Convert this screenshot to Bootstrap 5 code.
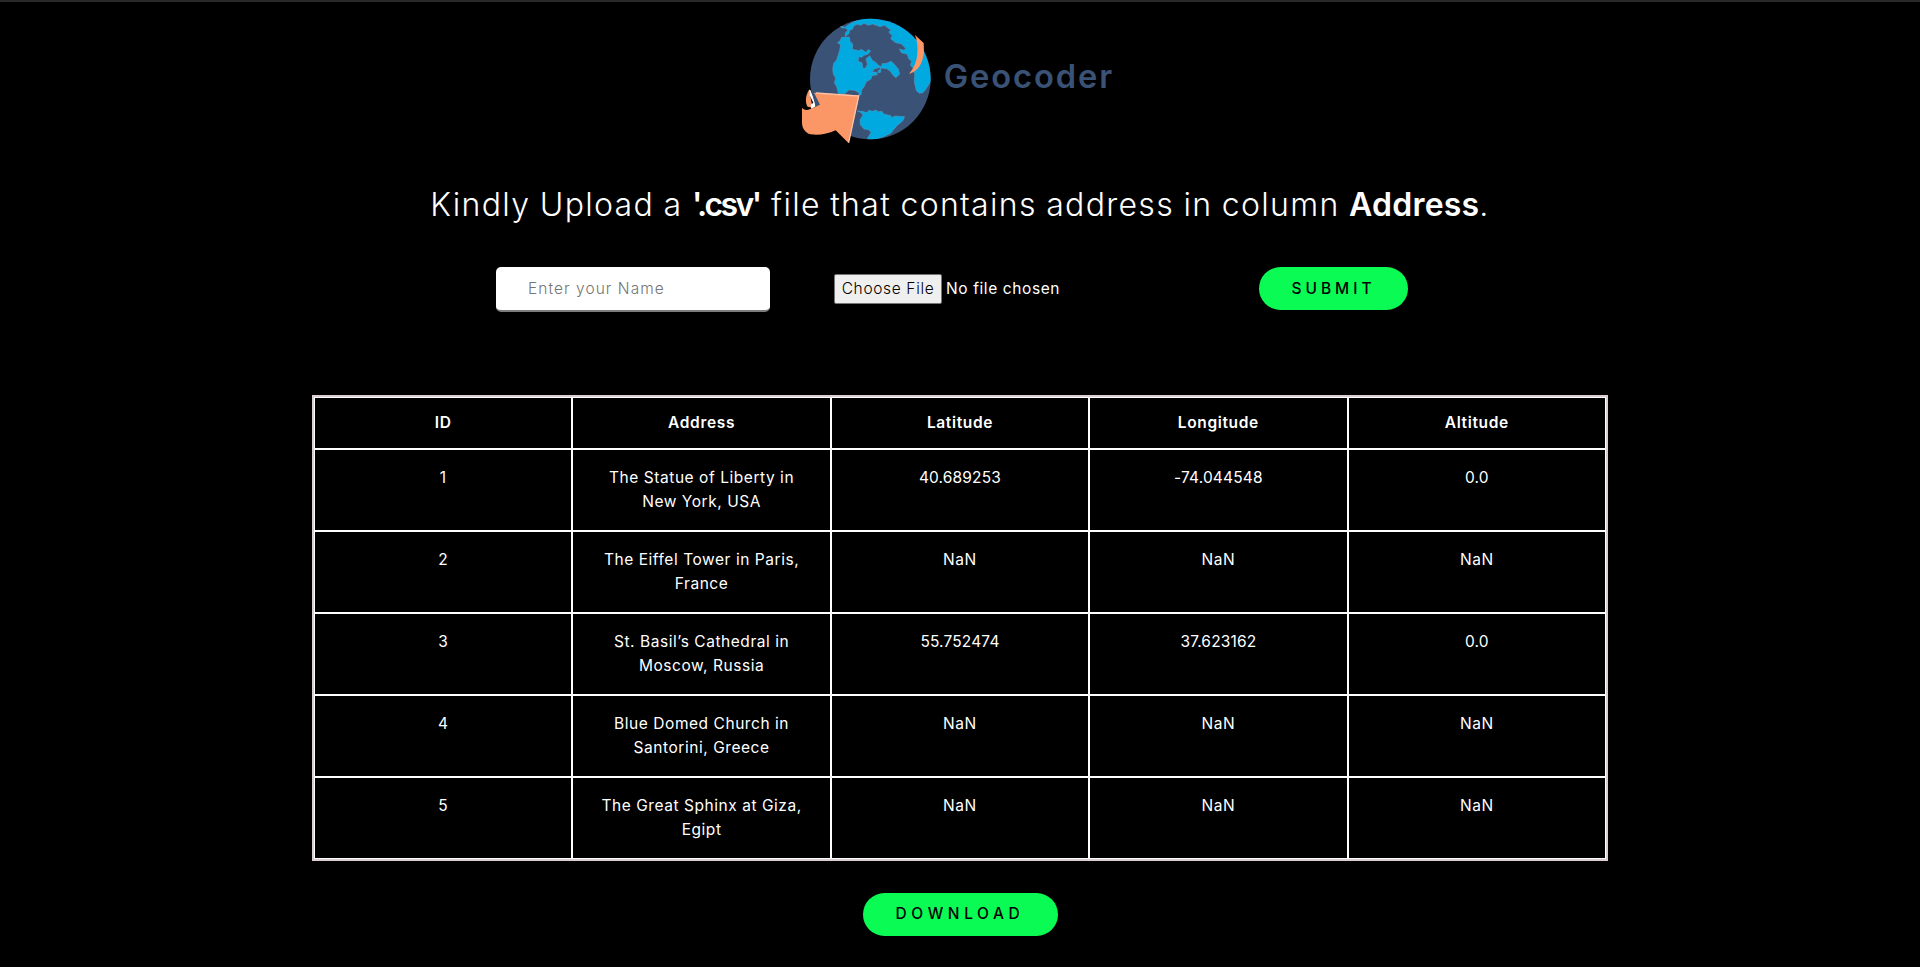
<!DOCTYPE html>
<html lang="en">
<head>
<meta charset="utf-8">
<meta name="viewport" content="width=device-width, initial-scale=1">
<title>Geocoder</title>
<link href="https://cdn.jsdelivr.net/npm/bootstrap@5.3.0/dist/css/bootstrap.min.css" rel="stylesheet">
<style>
body{background:#000;color:#fff;font:400 15.5px/24px Inter,"Open Sans",sans-serif;letter-spacing:.55px;border-top:2px solid #282828;height:967px;overflow:hidden}
.logo{display:block;width:340px;height:160px;margin-top:-2px}
h1{font-size:32px;line-height:40px;font-weight:300;letter-spacing:1.3px;word-spacing:-.8px;margin:25px 0 0;white-space:nowrap}
h1 b{font-weight:600;letter-spacing:.2px}
h1 b.ext{letter-spacing:-2.6px;margin-right:2px}
.upload{width:928px;height:45px;margin-top:42px;gap:64px}
.name-box{width:274px;height:45px;border:0;border-bottom:2px solid #7c7c7c;border-radius:5px;padding:0 32px;font-weight:300;letter-spacing:1.05px;color:#000;background:#fff}
.name-box::placeholder{color:#757575}
.file-box{width:361px;height:30px;margin-top:7px;letter-spacing:.6px}
.file-box::file-selector-button{width:108px;height:30px;margin-right:4px;padding:0;border:1px solid #767676;border-radius:2px;background:#efefef;color:#000;font-weight:300;letter-spacing:.65px}
.pill{height:43px;border:0;border-radius:22px;background:#0bfb55;color:#000;font-weight:450;letter-spacing:4px;padding:0}
.pill.wide{letter-spacing:4.6px;padding-bottom:1px}
.results{width:1296px;margin-top:83px;table-layout:fixed;border-collapse:separate;border-spacing:0;border:2px solid #dccdd0;text-align:center}
.results th,.results td{border:1px solid #fff;padding:16px 24px}
.results th{font-weight:600;padding:13px 24px;letter-spacing:.65px}
.results td.num{letter-spacing:.15px}
</style>
</head>
<body>
<main class="d-flex flex-column align-items-center">
<svg class="logo" viewBox="0 0 1020 480" role="img" aria-label="Geocoder">
  <defs><clipPath id="globe"><circle cx="241" cy="237" r="181"/></clipPath></defs>
  <circle cx="241" cy="237" r="181" fill="#3a5275"/>
  <g clip-path="url(#globe)" fill="#00a9e0" stroke="#5f9dbf" stroke-width="1.5" stroke-linejoin="round">
    <path d="M150 78L166 82 172 76 190 66 220 50 270 50 330 66 390 110 430 180 425 240 406 270 399 278 388 280 379 272 373 246 374 224 370 205 361 196 365 184 356 176 352 163 334 158 328 147 342 151 347 145 333 131 317 128 302 116 307 107 296 96 303 91 291 82 284 76 270 80 248 72 235 76 222 70 212 76 202 73 191 78 188 87 179 91 177 101 166 109 166 99 173 91 167 84 155 84Z"/>
    <path d="M155 112L178 111 180 124 188 132 187 148 207 152 214 148 228 157 236 148 242 154 233 163 222 166 216 172 207 170 204 184 216 188 219 205 226 205 232 193 228 177 239 167 248 182 255 185 267 197 267 203 253 207 246 216 259 216 262 224 246 227 243 237 229 245 222 261 215 270 213 284 206 286 207 278 193 271 176 270 165 281 145 281 140 260 133 248 137 235 130 222 128 208 131 190 140 180 149 151 152 134 142 128 150 123Z"/>
    <path d="M265 211L273 208 272 217 264 219ZM267 197L275 201 271 207Z"/>
    <path d="M276 191L290 190 303 184 312 192 325 207 329 222 318 233 309 226 301 214 290 206 274 204Z"/>
    <path d="M202 333L217 334 231 338 236 331 248 334 257 330 265 335 276 334 281 342 303 347 303 353 316 348 344 350 338 363 320 378 302 400 281 410 250 421 231 418 243 397 235 389 222 387 211 374 210 359 219 345 211 337Z"/>
  </g>
  <path d="M375 105L401 129 402 157C399 181 391 199 382 207Q373 217 357 222C373 202 380 184 382 161 384 139 381 121 375 105Z" fill="#fb9767"/>
  <path d="M57 270C46 287 45 309 53 320L68 323Z" fill="#fb9767"/>
  <path d="M57 269L61 270 76 308 77 319 64 327 62 315 70 308 59 286Z" fill="#fff"/>
  <path d="M66 278L76 278 90 313 77 320Z" fill="#3a5275"/>
  <path d="M72 278L208 286 176 430 137 391C112 402 86 407 62 403 44 398 36 383 36 368V324Q46 334 61 327L90 314Z" fill="#fb9767"/>
  <path d="M78 279L206 288 176 428" fill="none" stroke="#fdc2a7" stroke-width="4"/>
  <text x="461" y="264" textLength="506" lengthAdjust="spacing" font-family="Inter, sans-serif" font-size="98" font-weight="600" fill="#3a5275">Geocoder</text>
</svg>
<h1>Kindly Upload a <b class="ext">'.csv'</b> file that contains address in column <b>Address</b>.</h1>
<form class="upload d-flex align-items-start" onsubmit="return false">
  <input class="name-box" type="text" placeholder="Enter your Name" aria-label="Name">
  <input class="file-box" type="file" accept=".csv" aria-label="CSV file">
  <button class="pill" type="submit" style="width:149px">SUBMIT</button>
</form>
<table class="results">
  <thead><tr><th>ID</th><th>Address</th><th>Latitude</th><th>Longitude</th><th>Altitude</th></tr></thead>
  <tbody class="align-top">
    <tr><td>1</td><td>The Statue of Liberty in New York, USA</td><td class="num">40.689253</td><td class="num">-74.044548</td><td class="num">0.0</td></tr>
    <tr><td>2</td><td>The Eiffel Tower in Paris, France</td><td>NaN</td><td>NaN</td><td>NaN</td></tr>
    <tr><td>3</td><td>St. Basil’s Cathedral in Moscow, Russia</td><td class="num">55.752474</td><td class="num">37.623162</td><td class="num">0.0</td></tr>
    <tr><td>4</td><td>Blue Domed Church in Santorini, Greece</td><td>NaN</td><td>NaN</td><td>NaN</td></tr>
    <tr><td>5</td><td>The Great Sphinx at Giza, Egipt</td><td>NaN</td><td>NaN</td><td>NaN</td></tr>
  </tbody>
</table>
<button class="pill wide" type="button" style="width:195px;margin-top:32px">DOWNLOAD</button>
</main>
<script src="https://cdn.jsdelivr.net/npm/bootstrap@5.3.0/dist/js/bootstrap.bundle.min.js"></script>
</body>
</html>
